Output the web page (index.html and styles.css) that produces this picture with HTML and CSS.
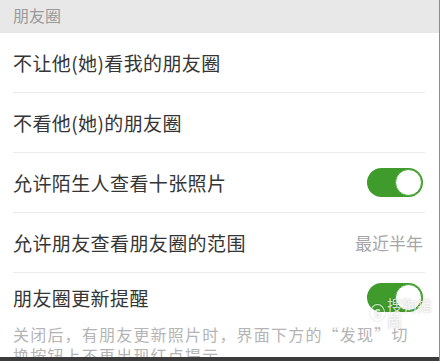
FILE: index.html
```html
<!DOCTYPE html>
<html lang="zh-CN">
<head>
    <meta charset="UTF-8">
    <meta name="viewport" content="width=device-width, initial-scale=1.0">
    <title>朋友圈</title>
    <link rel="stylesheet" href="styles.css">
</head>
<body>

    <div class="screen">
        <div class="section-title">朋友圈</div>

        <ul class="settings">
            <li class="row"><span class="label">不让他(她)看我的朋友圈</span></li>
            <li class="row"><span class="label">不看他(她)的朋友圈</span></li>
            <li class="row">
                <span class="label">允许陌生人查看十张照片</span>
                <span class="switch on"><span class="knob"></span></span>
            </li>
            <li class="row">
                <span class="label">允许朋友查看朋友圈的范围</span>
                <span class="value">最近半年</span>
            </li>
            <li class="row row-last">
                <span class="label">朋友圈更新提醒</span>
                <span class="switch on"><span class="knob"></span></span>
            </li>
        </ul>

        <p class="hint">关闭后，有朋友更新照片时，界面下方的“发现”切换按钮上不再出现红点提示。</p>

        <!-- video watermark + player bar sit over the page -->
        <div class="watermark"><span class="wm-logo">S</span>搜狗指南</div>
        <div class="player-bar"></div>
    </div>

</body>
</html>
```

FILE: styles.css
```css
body {
    margin: 0;
    background: #fff;
    font-family: "Noto Sans CJK SC", "Noto Sans", sans-serif;
}
.screen {
    position: relative;
    width: 439px;
    height: 361px;
    overflow: hidden;
    background: #fff;
    border-right: 1px solid #8c8c8c;
}
.section-title {
    height: 33px;
    line-height: 31px;
    padding-left: 13px;
    background: #e8e8e8;
    color: #9a9a9a;
    font-size: 16px;
}
.settings {
    list-style: none;
    margin: 0;
    padding: 0;
}
.row {
    display: flex;
    align-items: center;
    justify-content: space-between;
    height: 59px;
    margin: 0 14px 0 13px;
    padding-right: 2px;
    border-bottom: 1px solid #ececec;
}
.row-last {
    height: 48px;
    border-bottom: none;
}
.label {
    color: #353535;
    font-size: 19px;
    letter-spacing: 0.4px;
}
.value {
    color: #a6a6a6;
    font-size: 17px;
}
.switch {
    display: flex;
    justify-content: flex-end;
    align-items: center;
    width: 56px;
    height: 29px;
    border-radius: 15px;
    background: #3f9c2c;
    box-sizing: border-box;
    padding: 1px;
}
.knob {
    width: 25px;
    height: 25px;
    border-radius: 50%;
    background: #fff;
    border: 1px solid #4aa535;
}
.hint {
    margin: 3px 15px 0 13px;
    color: #b4b4b4;
    font-size: 16px;
    line-height: 21px;
    letter-spacing: 1.2px;
}
.watermark {
    position: absolute;
    left: 370px;
    top: 304px;
    display: flex;
    align-items: center;
    gap: 2px;
    height: 17px;
    line-height: 16px;
    color: rgba(255, 255, 255, 0.8);
    font-size: 15px;
    text-shadow: 0 0 2px rgba(0, 0, 0, 0.25);
}
.wm-logo {
    display: inline-flex;
    align-items: center;
    justify-content: center;
    width: 15px;
    height: 15px;
    border-radius: 50%;
    border: 1px solid rgba(255, 255, 255, 0.8);
    box-shadow: 0 0 2px rgba(0, 0, 0, 0.25);
    font-size: 11px;
    font-weight: bold;
}
.player-bar {
    position: absolute;
    left: 0;
    right: 0;
    bottom: 0;
    height: 4px;
    background: #3c3c3c;
}
```
